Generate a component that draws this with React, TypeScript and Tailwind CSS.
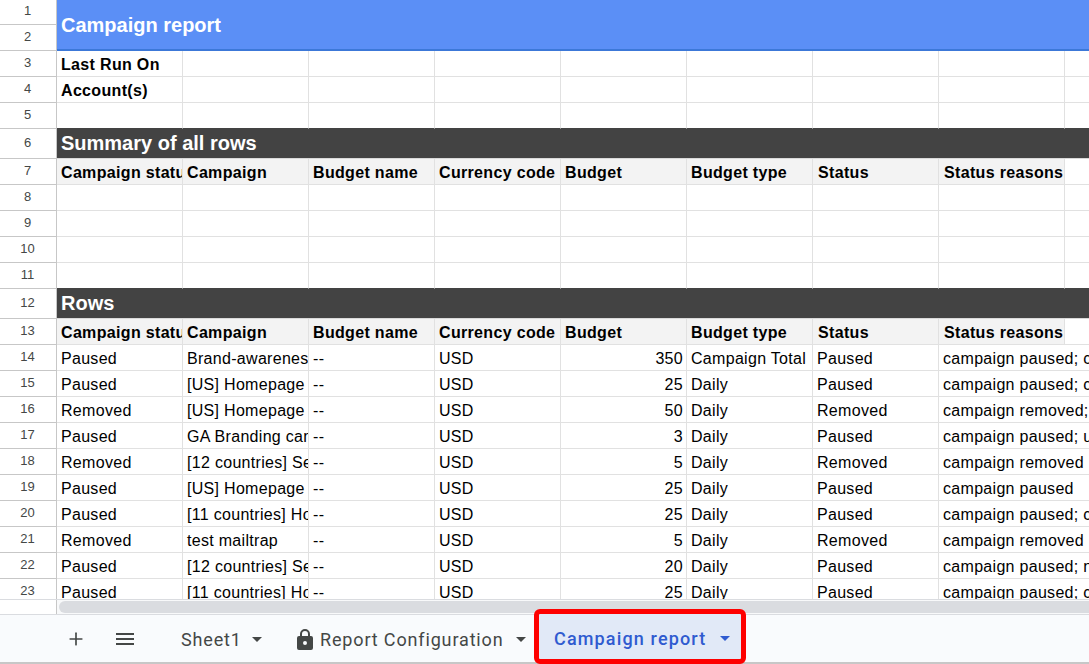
import { Plus } from "lucide-react";

const columnCount = 8;
const headers = ["Campaign status", "Campaign", "Budget name", "Currency code", "Budget", "Budget type", "Status", "Status reasons"];

const data = [
    ["Paused", "Brand-awareness campaign", "--", "USD", "350", "Campaign Total", "Paused", "campaign paused; campaign"],
    ["Paused", "[US] Homepage campaign", "--", "USD", "25", "Daily", "Paused", "campaign paused; campaign"],
    ["Removed", "[US] Homepage campaign", "--", "USD", "50", "Daily", "Removed", "campaign removed; ut"],
    ["Paused", "GA Branding campaign", "--", "USD", "3", "Daily", "Paused", "campaign paused; ut"],
    ["Removed", "[12 countries] Search", "--", "USD", "5", "Daily", "Removed", "campaign removed"],
    ["Paused", "[US] Homepage campaign", "--", "USD", "25", "Daily", "Paused", "campaign paused"],
    ["Paused", "[11 countries] Homepage", "--", "USD", "25", "Daily", "Paused", "campaign paused; campaign"],
    ["Removed", "test mailtrap", "--", "USD", "5", "Daily", "Removed", "campaign removed"],
    ["Paused", "[12 countries] Search", "--", "USD", "20", "Daily", "Paused", "campaign paused; no"],
    ["Paused", "[11 countries] Homepage", "--", "USD", "25", "Daily", "Paused", "campaign paused; campaign"],
];

const RowNumber = ({ n, height }: { n: number; height: string }) => (
    <div className={`${height} w-[57px] shrink-0 flex items-center justify-center border-r border-b border-[#c7c7c7] bg-white pr-px pb-[2px] text-[13px] text-[#444746]`}>
        {n}
    </div>
);

const EmptyRow = ({ n, dark }: { n: number; dark?: boolean }) => (
    <div className="flex h-[26px]">
        <RowNumber n={n} height="h-[26px]" />
        {Array.from({ length: columnCount }).map((_, i) => (
            <div key={i} className={`w-[126px] shrink-0 border-r border-b border-r-[#e1e1e1] ${dark ? "border-b-[#434343]" : "border-b-[#e1e1e1]"}`} />
        ))}
        <div className={`flex-1 border-b ${dark ? "border-b-[#434343]" : "border-b-[#e1e1e1]"}`} />
    </div>
);

const LabelRow = ({ n, label }: { n: number; label: string }) => (
    <div className="flex h-[26px]">
        <RowNumber n={n} height="h-[26px]" />
        <div className="w-[126px] shrink-0 border-r border-b border-[#e1e1e1] pl-1 text-base font-bold leading-[27px] tracking-[0.33px] text-black">{label}</div>
        {Array.from({ length: columnCount - 1 }).map((_, i) => (
            <div key={i} className="w-[126px] shrink-0 border-r border-b border-[#e1e1e1]" />
        ))}
        <div className="flex-1 border-b border-[#e1e1e1]" />
    </div>
);

const SectionRow = ({ n, title }: { n: number; title: string }) => (
    <div className="flex h-[30px]">
        <RowNumber n={n} height="h-[30px]" />
        <div className="flex-1 border-b border-[#d9d9d9] bg-[#434343] pl-1 text-[20px] font-bold leading-[29px] text-white">{title}</div>
    </div>
);

const HeaderRow = ({ n }: { n: number }) => (
    <div className="flex h-[26px]">
        <RowNumber n={n} height="h-[26px]" />
        {headers.map((h, i) => (
            <div key={h} className={`w-[126px] shrink-0 overflow-hidden whitespace-nowrap border-r border-b border-[#e1e1e1] bg-[#f3f3f3] text-base font-bold leading-[27px] tracking-[0.33px] text-black ${i > 5 ? "pl-[5px]" : "pl-1"}`}>
                {h}
            </div>
        ))}
        <div className="flex-1 border-b border-[#e1e1e1]" />
    </div>
);

const DataRow = ({ n, row }: { n: number; row: string[] }) => (
    <div className="flex h-[26px] shrink-0">
        <RowNumber n={n} height="h-[26px]" />
        {row.map((value, i) => {
            if (i === 4) {
                return <div key={i} className="w-[126px] shrink-0 border-r border-b border-[#e1e1e1] pr-[3px] text-right text-base leading-[27px] tracking-[0.3px] text-black">{value}</div>;
            }
            if (i === 7) {
                return <div key={i} className="w-[126px] shrink-0 whitespace-nowrap border-b border-[#e1e1e1] pl-1 text-base leading-[27px] tracking-[0.3px] text-black">{value}</div>;
            }
            return <div key={i} className="w-[126px] shrink-0 overflow-hidden whitespace-nowrap border-r border-b border-[#e1e1e1] pl-1 text-base leading-[27px] tracking-[0.3px] text-black">{value}</div>;
        })}
        <div className="flex-1 border-b border-[#e1e1e1]" />
    </div>
);

const Caret = ({ className }: { className: string }) => (
    <svg viewBox="0 0 10 5" className={`h-[5px] w-[10px] shrink-0 ${className}`}>
        <path d="M0 0h10L5 5z" />
    </svg>
);

const App = () => {
    return (
        <div className="flex h-[664px] w-[1089px] flex-col overflow-hidden bg-white font-['Liberation_Sans',Arial,sans-serif]">
            <div className="flex h-[599px] shrink-0 flex-col overflow-hidden">
                <div className="flex h-[51px] shrink-0">
                    <div className="flex w-[57px] shrink-0 flex-col">
                        <RowNumber n={1} height="h-[25px]" />
                        <RowNumber n={2} height="h-[26px]" />
                    </div>
                    <div className="flex-1 border-b-2 border-[#3c78d8] bg-[#5b8ff6] pl-1 text-[20px] font-bold leading-[50px] text-white">
                        Campaign report
                    </div>
                </div>
                <LabelRow n={3} label="Last Run On" />
                <LabelRow n={4} label="Account(s)" />
                <EmptyRow n={5} dark />
                <SectionRow n={6} title="Summary of all rows" />
                <HeaderRow n={7} />
                <EmptyRow n={8} />
                <EmptyRow n={9} />
                <EmptyRow n={10} />
                <EmptyRow n={11} dark />
                <SectionRow n={12} title="Rows" />
                <HeaderRow n={13} />
                {data.map((row, i) => (
                    <DataRow key={i} n={i + 14} row={row} />
                ))}
            </div>

            <div className="flex h-[16px] shrink-0 border-t border-b border-[#dadce0] bg-[#f8f9fa]">
                <div className="h-full w-[57px] shrink-0 border-r border-[#c7c7c7] bg-white" />
                <div className="ml-[2px] mt-px h-[12px] flex-1 rounded-l-md bg-[#dadce0]" />
            </div>

            <div className="flex h-[49px] shrink-0 items-start border-b-2 border-[#c7c7c7] bg-[#f9fbfd] font-['Roboto',sans-serif] text-[18px] font-normal tracking-[0.85px] text-[#444746]">
                <div className="flex h-[47px] items-center pt-[1px]">
                    <Plus size={20} strokeWidth={2} className="ml-[66px] shrink-0" />
                    <svg viewBox="0 0 18 12" className="ml-[30px] h-[12px] w-[18px] shrink-0 fill-[#444746]">
                        <path d="M0 0h18v2H0zM0 5h18v2H0zM0 10h18v2H0z" />
                    </svg>
                    <span className="ml-[47px] w-[60px] whitespace-nowrap">Sheet1</span>
                    <Caret className="ml-[11px] fill-[#444746]" />
                    <svg viewBox="0 0 16 21" className="ml-[35px] h-[21px] w-[16px] shrink-0 fill-[#444746]">
                        <path d="M14 7h-1V5A5 5 0 0 0 3 5v2H2a2 2 0 0 0-2 2v10a2 2 0 0 0 2 2h12a2 2 0 0 0 2-2V9a2 2 0 0 0-2-2ZM8 16a2 2 0 1 1 0-4 2 2 0 0 1 0 4Zm3-9H5V5a3 3 0 0 1 6 0v2Z" />
                    </svg>
                    <span className="ml-[7px] w-[182px] whitespace-nowrap">Report Configuration</span>
                    <Caret className="ml-[14px] fill-[#444746]" />
                </div>
                <div className="relative ml-[13px] -mt-px flex h-[45px] w-[202px] shrink-0 items-center bg-[#e1e9f7] pl-[15px] pt-[4px] text-[#2f5bd0]">
                    <span className="w-[152px] whitespace-nowrap font-medium tracking-[1.15px]">Campaign report</span>
                    <Caret className="ml-[14px] fill-[#2f5bd0]" />
                    <div className="absolute -inset-[5px] rounded-[6px] border-[5px] border-[#fe0000]" />
                </div>
            </div>
        </div>
    );
};

export default App;
